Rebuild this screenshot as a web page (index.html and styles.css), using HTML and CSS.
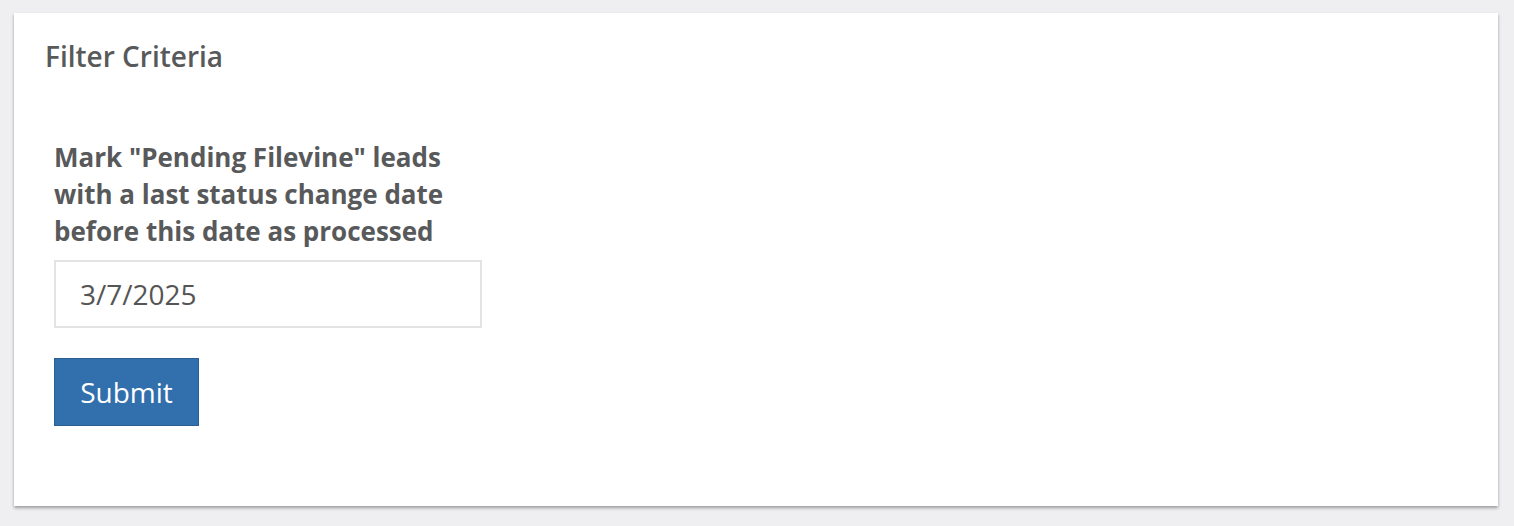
FILE: index.html
```html
<!DOCTYPE html>
<html>
<head>
<meta charset="utf-8">
<link rel="stylesheet" href="styles.css">
</head>
<body>
<div class="page">
  <div class="card">
    <h2 class="card-title">Filter Criteria</h2>
    <form class="form">
      <label class="label" for="d">Mark "Pending Filevine" leads with a last status change date before this date as processed</label>
      <input id="d" class="input" type="text" value="3/7/2025">
      <button class="btn" type="button">Submit</button>
    </form>
  </div>
</div>
</body>
</html>
```
FILE: styles.css
```css
html, body { margin: 0; padding: 0; }
body {
  background: #efeff1;
  font-family: "Open Sans", "Liberation Sans", sans-serif;
  color: #58595b;
}
.page {
  padding: 13px 16px 20px 14px;
}
.card {
  background: #fff;
  box-shadow: 0 2px 3px rgba(0,0,0,0.35);
  height: 493px;
  box-sizing: border-box;
  padding: 24px 31px 0 31px;
}
.card-title {
  margin: 0;
  font-size: 28px;
  font-weight: 600;
  line-height: 38px;
  color: #58595b;
}
.form {
  padding: 64px 9px 0 9px;
  display: flex;
  flex-direction: column;
  align-items: flex-start;
}
.label {
  display: block;
  width: 420px;
  font-size: 26px;
  font-weight: 700;
  line-height: 37px;
  color: #58595b;
  margin-bottom: 10px;
}
.input {
  box-sizing: border-box;
  width: 428px;
  height: 68px;
  border: 2px solid #e3e3e3;
  padding: 0 24px;
  font-family: inherit;
  font-size: 28px;
  color: #555;
  outline: none;
  margin: 0 0 30px 0;
}
.btn {
  box-sizing: border-box;
  height: 68px;
  width: 145px;
  background: #326fad;
  border: 1px solid #2a5e93;
  color: #fff;
  font-family: inherit;
  font-size: 28px;
  padding: 0;
}
```
